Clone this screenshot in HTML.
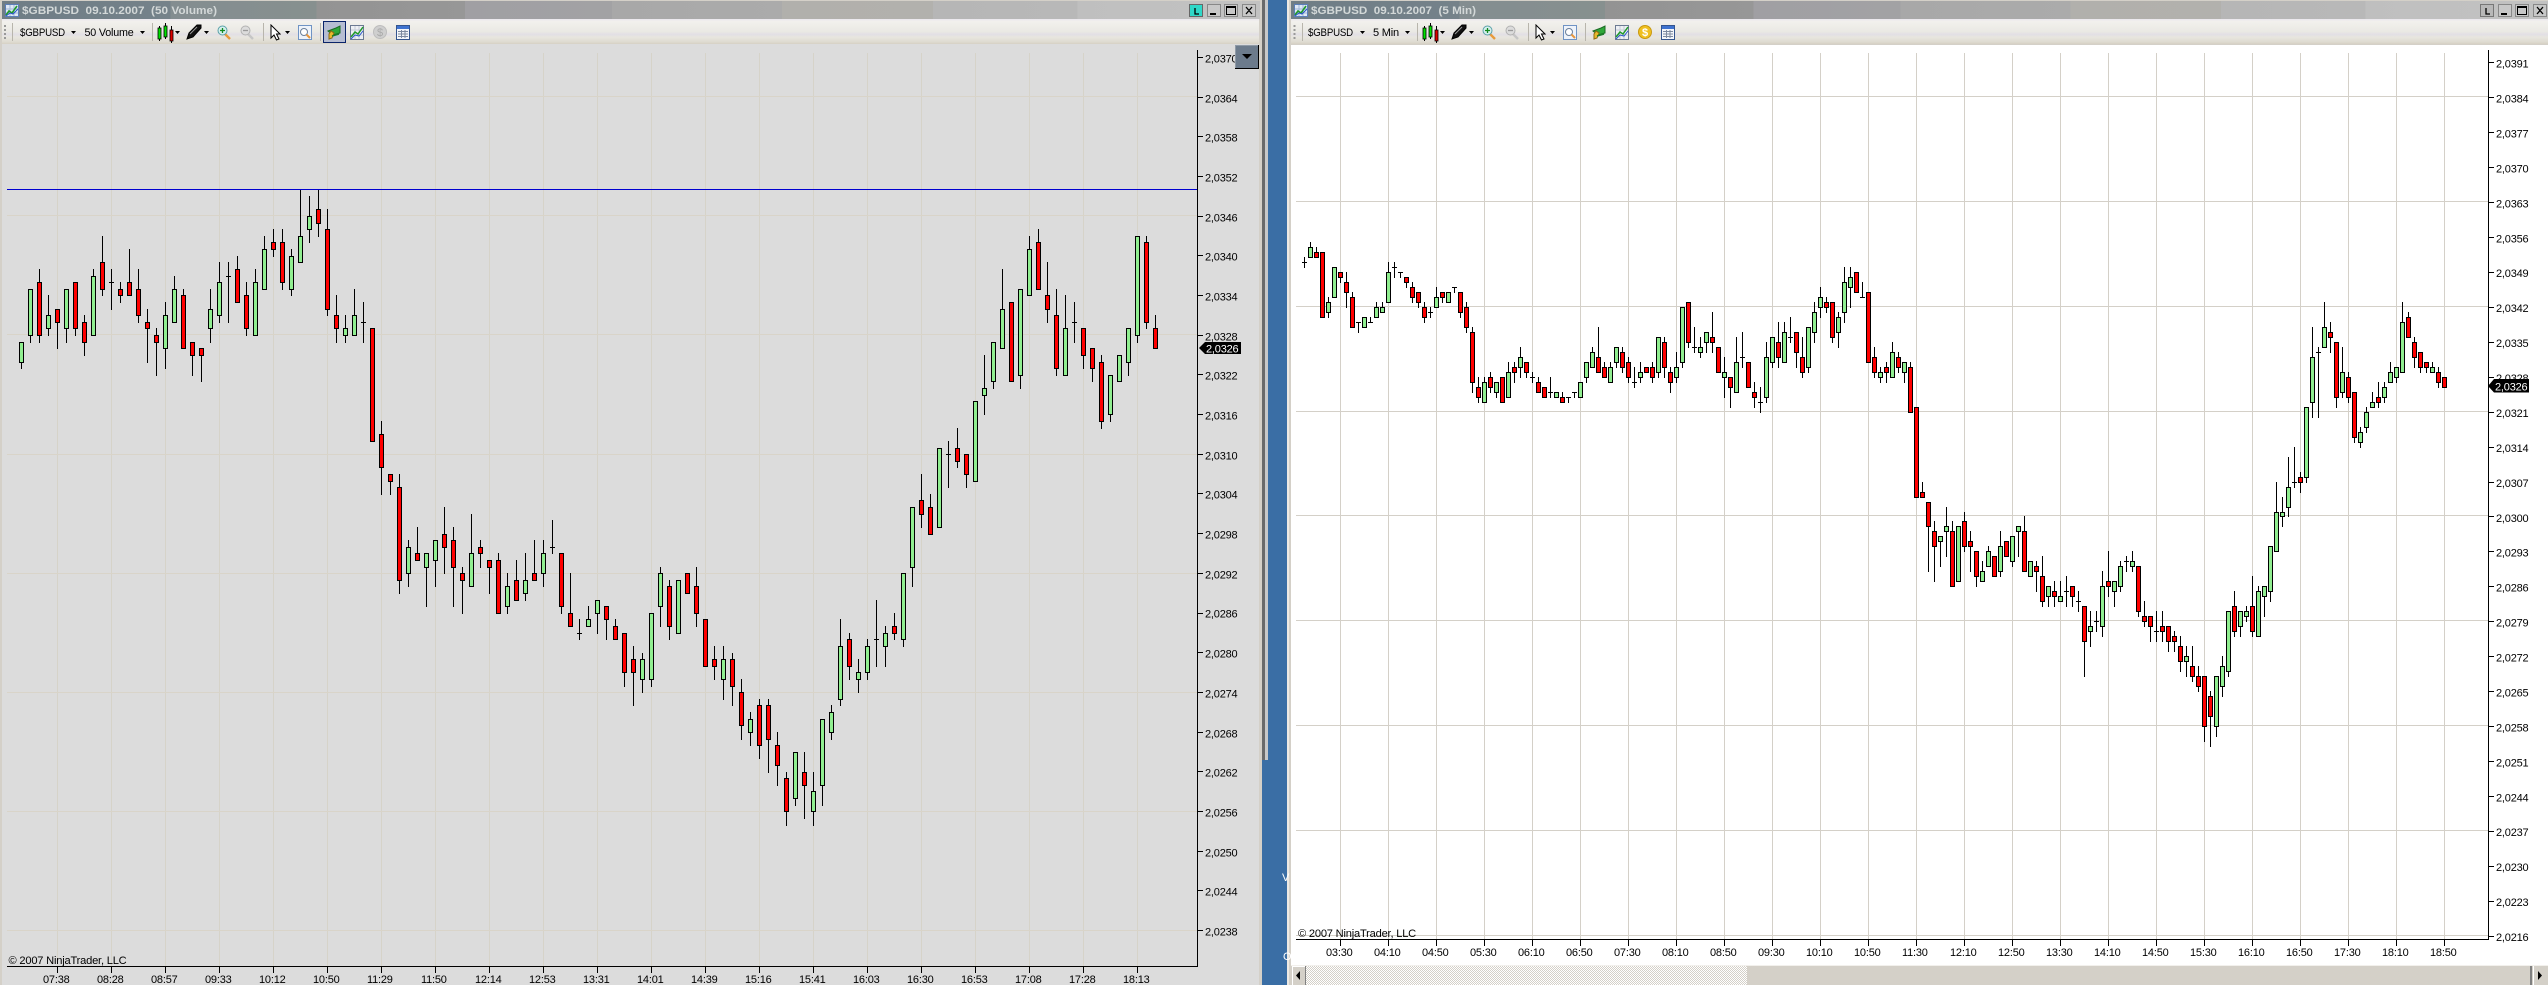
<!DOCTYPE html>
<html><head><meta charset="utf-8"><title>NinjaTrader charts</title>
<style>
html,body{margin:0;padding:0;background:#3a6ea5;width:2548px;height:985px;overflow:hidden}
svg{display:block;position:absolute;left:0;top:0}
text{font-family:"Liberation Sans",sans-serif;font-size:11px;fill:#000;white-space:pre;letter-spacing:-.2px}
.t{font-weight:bold;fill:#d3d8d8;letter-spacing:0}
.m{fill:#fff}
</style></head><body>
<svg width="2548" height="985" viewBox="0 0 2548 985" xmlns="http://www.w3.org/2000/svg">
<defs>
<linearGradient id="tb" x1="0" x2="0" y1="0" y2="1">
<stop offset="0" stop-color="#ebe7ee"/><stop offset=".1" stop-color="#f2f1ed"/><stop offset=".5" stop-color="#eae9e4"/><stop offset=".62" stop-color="#e2dfe5"/><stop offset=".72" stop-color="#e8e6df"/><stop offset=".92" stop-color="#dedbd0"/><stop offset="1" stop-color="#d6d1c4"/>
</linearGradient>
<linearGradient id="tl" x1="0" x2="1" y1="0" y2="0">
<stop offset="0" stop-color="#6f7d86"/><stop offset=".134" stop-color="#75828a"/><stop offset=".134" stop-color="#838d90"/><stop offset=".25" stop-color="#87908f"/><stop offset=".25" stop-color="#939393"/><stop offset=".368" stop-color="#979797"/><stop offset=".368" stop-color="#a09fa3"/><stop offset=".485" stop-color="#a2a2a4"/><stop offset=".485" stop-color="#a8a8a8"/><stop offset=".62" stop-color="#ababab"/><stop offset=".62" stop-color="#b1b0ac"/><stop offset=".74" stop-color="#b2b1ad"/><stop offset=".74" stop-color="#b6b6b6"/><stop offset=".855" stop-color="#b8b8b8"/><stop offset=".855" stop-color="#bfbfbf"/><stop offset="1" stop-color="#c2c2c2"/>
</linearGradient>
<pattern id="dith" width="2" height="2" patternUnits="userSpaceOnUse"><rect width="2" height="2" fill="#fff"/><rect width="1" height="1" fill="#d4d0c8"/><rect x="1" y="1" width="1" height="1" fill="#d4d0c8"/></pattern>
<symbol id="tic" viewBox="0 0 14 13" width="14" height="13"><rect x=".5" y=".5" width="13" height="12" fill="#dfe8f5" stroke="#5c7fb8"/><path d="M1 5H13M1 9H13M5 1V12M9 1V12" stroke="#9fb6d8"/><path d="M1 11L4 7 7 9 12 2" stroke="#1f9a2a" stroke-width="1.6" fill="none"/><path d="M1 12L5 9 8 10 13 5" stroke="#2a55c8" fill="none"/></symbol>
<symbol id="cand" viewBox="0 0 17 20" width="17" height="20"><path d="M2.5 3V18M8.5 0V16M14.5 3V20" stroke="#000"/><rect x="1" y="5" width="3" height="11" fill="#00e000" stroke="#000" stroke-width=".8"/><rect x="7" y="3" width="3" height="11" fill="#00e000" stroke="#000" stroke-width=".8"/><rect x="13" y="7" width="3" height="11" fill="#e00000" stroke="#000" stroke-width=".8"/></symbol>
<symbol id="pen" viewBox="0 0 16 16" width="16" height="16"><path d="M1 15L3 9 11 1 15 1 15 4 7 13Z" fill="#111" stroke="#000"/><path d="M4 10L11 3" stroke="#999"/></symbol>
<symbol id="zin" viewBox="0 0 14 15" width="14" height="15"><path d="M8 9L13 14" stroke="#e89a3c" stroke-width="2.4"/><circle cx="5.5" cy="5.5" r="4.5" fill="#d6f0ee" stroke="#5aa0a8"/><path d="M3 5.5H8M5.500 3V8" stroke="#128a20" stroke-width="1.3"/></symbol>
<symbol id="zout" viewBox="0 0 14 15" width="14" height="15"><path d="M8 9L13 14" stroke="#c6c6c6" stroke-width="2.4"/><circle cx="5.5" cy="5.500" r="4.5" fill="#dcdcdc" stroke="#b2b2b2"/><path d="M3 5.5H8" stroke="#9a9a9a" stroke-width="1.3"/></symbol>
<symbol id="cur" viewBox="0 0 11 17" width="11" height="17"><path d="M1 1V14L4 11 6.500 16 9 15 6.500 10H10Z" fill="#fff" stroke="#000"/></symbol>
<symbol id="zr" viewBox="0 0 14 15" width="14" height="15"><rect x=".5" y=".5" width="13" height="14" fill="#eef3fa" stroke="#6f93c4"/><circle cx="6" cy="7" r="3.500" fill="#fff" stroke="#6a7f9a"/><path d="M8.500 9.500L12 13" stroke="#e8963c" stroke-width="2"/></symbol>
<symbol id="grn" viewBox="0 0 14 15" width="14" height="15"><path d="M1 6L9 3 13 1V8L6 10Z" fill="#2fa83a" stroke="#1b6a24"/><path d="M2 9L4 6 7 8 5 13 2 14Z" fill="#e8b92c" stroke="#8c6a14"/><path d="M5 11L12 9" stroke="#1c7c2a" stroke-width="1.500"/></symbol>
<symbol id="chr" viewBox="0 0 14 15" width="14" height="15"><rect x=".5" y=".5" width="13" height="14" fill="#eef0f4" stroke="#6c7a92"/><path d="M1 5H13M1 10H13M5 1V14M9 1V14" stroke="#c4cad6"/><path d="M1 12L5 7 8 9 13 2" stroke="#1f9a2a" stroke-width="1.500" fill="none"/><path d="M1 14L5 10 9 11 13 6" stroke="#2a55c8" fill="none"/></symbol>
<symbol id="tbl" viewBox="0 0 14 15" width="14" height="15"><rect x=".5" y=".5" width="13" height="14" fill="#f4f6fa" stroke="#34558e"/><rect x="1" y="1" width="12" height="3" fill="#3f73d0"/><path d="M2 6.500H12M2 9H12M2 11.500H12M5.500 5V13M9 5V13" stroke="#7d8aa0"/></symbol>
</defs>

<!-- backgrounds -->
<rect x="0" y="0" width="2548" height="985" fill="#3a6ea5"/>
<rect x="0" y="0" width="1262" height="985" fill="#d4d0c8"/>
<rect x="1262" y="0" width="3" height="760" fill="#6a6a6a"/>
<rect x="1265" y="0" width="3" height="760" fill="#c8c8c8"/>
<rect x="1287" y="0" width="4" height="985" fill="#eeeae4"/>
<rect x="1289" y="0" width="1" height="985" fill="#d4d0c8"/>
<rect x="1290" y="0" width="1258" height="985" fill="#d4d0c8"/>

<!-- left window chrome -->
<rect x="2" y="1" width="1258" height="18" fill="url(#tl)"/>
<rect x="2" y="19" width="1257" height="25" fill="url(#tb)"/>
<rect x="2" y="44" width="1257" height="941" fill="#dcdcdc"/>
<use href="#tic" x="5" y="4"/>
<text class="t" x="22" y="14" textLength="195" lengthAdjust="spacingAndGlyphs">$GBPUSD  09.10.2007  (50 Volume)</text>
<!-- right window chrome -->
<rect x="1291" y="1" width="1257" height="18" fill="url(#tl)"/>
<rect x="1291" y="19" width="1257" height="25" fill="url(#tb)"/>
<rect x="1291" y="45" width="1257" height="920" fill="#fff"/>
<use href="#tic" x="1294" y="4"/>
<text class="t" x="1311" y="14" textLength="165" lengthAdjust="spacingAndGlyphs">$GBPUSD  09.10.2007  (5 Min)</text>

<!-- window buttons left -->
<g shape-rendering="crispEdges">
<rect x="1189.500" y="4.500" width="13" height="12" fill="#2fd8c8" stroke="#666"/>
<rect x="1207.500" y="4.500" width="13" height="12" fill="#c8c8c8" stroke="#888"/><rect x="1210" y="13" width="6" height="2" fill="#000"/>
<rect x="1224.500" y="4.500" width="13" height="12" fill="#c8c8c8" stroke="#888"/><rect x="1226.500" y="6.500" width="9" height="8" fill="none" stroke="#000"/><rect x="1226" y="6" width="10" height="2" fill="#000"/>
<rect x="1242.500" y="4.500" width="13" height="12" fill="#c8c8c8" stroke="#888"/>
<rect x="2480.500" y="4.500" width="13" height="12" fill="#b8b8b8" stroke="#777"/>
<rect x="2498.500" y="4.500" width="13" height="12" fill="#c8c8c8" stroke="#888"/><rect x="2501" y="13" width="6" height="2" fill="#000"/>
<rect x="2515.500" y="4.500" width="13" height="12" fill="#c8c8c8" stroke="#888"/><rect x="2517.500" y="6.500" width="9" height="8" fill="none" stroke="#000"/><rect x="2517" y="6" width="10" height="2" fill="#000"/>
<rect x="2533.500" y="4.500" width="13" height="12" fill="#c8c8c8" stroke="#888"/>
</g>
<path d="M1195 8V14H1199M1246 7L1252 14M1252 7L1246 14M2486 8V14H2490M2537 7L2543 14M2543 7L2537 14" stroke="#000" fill="none" stroke-width="1.300"/>

<!-- left toolbar -->
<g>
<path d="M5 25V27M5 29V31M5 33V35M5 37V39" stroke="#999" stroke-width="2"/>
<path d="M12.500 23V41M152.500 23V41M263.500 23V41M320.500 23V41" stroke="#b8b5ac"/>
<text x="20" y="36" textLength="45" lengthAdjust="spacingAndGlyphs">$GBPUSD</text>
<text x="84.500" y="36" textLength="49" lengthAdjust="spacingAndGlyphs">50 Volume</text>
<path d="M71 31H76L73.500 34ZM140 31H145L142.500 34ZM175 31H180L177.500 34ZM204 31H209L206.500 34ZM285 31H290L287.500 34Z" fill="#000"/>
<use href="#cand" x="157" y="23"/><use href="#pen" x="186" y="24"/><use href="#zin" x="217" y="25"/><use href="#zout" x="240" y="25"/><use href="#cur" x="270" y="24"/><use href="#zr" x="298" y="25"/>
<rect x="323.500" y="21.500" width="22" height="21" fill="#b6bdd2" stroke="#0a246a"/>
<use href="#grn" x="327" y="25"/><use href="#chr" x="350" y="25"/>
<circle cx="380" cy="32" r="6.500" fill="#cfcfcf" stroke="#bdbdbd"/><text x="377" y="36" style="fill:#aaa;letter-spacing:0">$</text>
<use href="#tbl" x="396" y="25"/>
</g>
<!-- right toolbar -->
<g>
<path d="M1294.500 25V27M1294.500 29V31M1294.500 33V35M1294.500 37V39" stroke="#999" stroke-width="2"/>
<path d="M1302.500 23V41M1417.500 23V41M1528.500 23V41M1585.500 23V41" stroke="#b8b5ac"/>
<text x="1308" y="36" textLength="45" lengthAdjust="spacingAndGlyphs">$GBPUSD</text>
<text x="1373" y="36" textLength="26" lengthAdjust="spacingAndGlyphs">5 Min</text>
<path d="M1360 31H1365L1362.500 34ZM1405 31H1410L1407.500 34ZM1440 31H1445L1442.500 34ZM1469 31H1474L1471.500 34ZM1550 31H1555L1552.500 34Z" fill="#000"/>
<use href="#cand" x="1422" y="23"/><use href="#pen" x="1451" y="24"/><use href="#zin" x="1482" y="25"/><use href="#zout" x="1505" y="25"/><use href="#cur" x="1535" y="24"/><use href="#zr" x="1563" y="25"/>
<use href="#grn" x="1592" y="25"/><use href="#chr" x="1615" y="25"/>
<circle cx="1645" cy="32" r="6.500" fill="#f0c020" stroke="#c89810"/><text x="1642" y="36" style="fill:#fff;letter-spacing:0;font-weight:bold">$</text>
<use href="#tbl" x="1661" y="25"/>
</g>

<!-- grids / axes drawn by script into these groups -->
<g id="gridL" shape-rendering="crispEdges"></g>
<g id="gridR" shape-rendering="crispEdges"></g>
<path d="M7 189.500H1197" stroke="#0000d0" shape-rendering="crispEdges"/>
<g id="cL" shape-rendering="crispEdges"></g>
<g id="cR" shape-rendering="crispEdges"></g>
<g id="axes" shape-rendering="crispEdges"></g>

<!-- left y labels -->
<g>
<text x="1205" y="62.500">2,0370</text><text x="1205" y="102.500">2,0364</text><text x="1205" y="141.500">2,0358</text><text x="1205" y="181.500">2,0352</text><text x="1205" y="221.500">2,0346</text><text x="1205" y="260.500">2,0340</text><text x="1205" y="300.500">2,0334</text><text x="1205" y="340.500">2,0328</text><text x="1205" y="379.500">2,0322</text><text x="1205" y="419.500">2,0316</text><text x="1205" y="459.500">2,0310</text><text x="1205" y="498.500">2,0304</text><text x="1205" y="538.500">2,0298</text><text x="1205" y="578.500">2,0292</text><text x="1205" y="617.500">2,0286</text><text x="1205" y="657.500">2,0280</text><text x="1205" y="697.500">2,0274</text><text x="1205" y="737.500">2,0268</text><text x="1205" y="776.500">2,0262</text><text x="1205" y="816.500">2,0256</text><text x="1205" y="856.500">2,0250</text><text x="1205" y="895.500">2,0244</text><text x="1205" y="935.500">2,0238</text>
</g>
<!-- right y labels -->
<g>
<text x="2496" y="67.500">2,0391</text><text x="2496" y="102.500">2,0384</text><text x="2496" y="137.500">2,0377</text><text x="2496" y="172.500">2,0370</text><text x="2496" y="207.500">2,0363</text><text x="2496" y="242.500">2,0356</text><text x="2496" y="277">2,0349</text><text x="2496" y="312">2,0342</text><text x="2496" y="347">2,0335</text><text x="2496" y="382">2,0328</text><text x="2496" y="417">2,0321</text><text x="2496" y="452">2,0314</text><text x="2496" y="487">2,0307</text><text x="2496" y="522">2,0300</text><text x="2496" y="556.500">2,0293</text><text x="2496" y="591.500">2,0286</text><text x="2496" y="626.500">2,0279</text><text x="2496" y="661.500">2,0272</text><text x="2496" y="696.500">2,0265</text><text x="2496" y="731.500">2,0258</text><text x="2496" y="766.500">2,0251</text><text x="2496" y="801.500">2,0244</text><text x="2496" y="836">2,0237</text><text x="2496" y="871">2,0230</text><text x="2496" y="906">2,0223</text><text x="2496" y="941">2,0216</text>
</g>
<!-- left x labels -->
<g>
<text x="43" y="983">07:38</text><text x="97" y="983">08:28</text><text x="151" y="983">08:57</text><text x="205" y="983">09:33</text><text x="259" y="983">10:12</text><text x="313" y="983">10:50</text><text x="367" y="983">11:29</text><text x="421" y="983">11:50</text><text x="475" y="983">12:14</text><text x="529" y="983">12:53</text><text x="583" y="983">13:31</text><text x="637" y="983">14:01</text><text x="691" y="983">14:39</text><text x="745" y="983">15:16</text><text x="799" y="983">15:41</text><text x="853" y="983">16:03</text><text x="907" y="983">16:30</text><text x="961" y="983">16:53</text><text x="1015" y="983">17:08</text><text x="1069" y="983">17:28</text><text x="1123" y="983">18:13</text>
<text x="8.500" y="964" textLength="118" lengthAdjust="spacingAndGlyphs">© 2007 NinjaTrader, LLC</text>
</g>
<!-- right x labels -->
<g>
<text x="1326" y="956">03:30</text><text x="1374" y="956">04:10</text><text x="1422" y="956">04:50</text><text x="1470" y="956">05:30</text><text x="1518" y="956">06:10</text><text x="1566" y="956">06:50</text><text x="1614" y="956">07:30</text><text x="1662" y="956">08:10</text><text x="1710" y="956">08:50</text><text x="1758" y="956">09:30</text><text x="1806" y="956">10:10</text><text x="1854" y="956">10:50</text><text x="1902" y="956">11:30</text><text x="1950" y="956">12:10</text><text x="1998" y="956">12:50</text><text x="2046" y="956">13:30</text><text x="2094" y="956">14:10</text><text x="2142" y="956">14:50</text><text x="2190" y="956">15:30</text><text x="2238" y="956">16:10</text><text x="2286" y="956">16:50</text><text x="2334" y="956">17:30</text><text x="2382" y="956">18:10</text><text x="2430" y="956">18:50</text>
<text x="1298" y="937" textLength="118" lengthAdjust="spacingAndGlyphs">© 2007 NinjaTrader, LLC</text>
</g>

<!-- price markers -->
<path d="M1199 348L1205 342H1241V354H1205Z" fill="#000"/><text class="m" x="1206" y="352.500">2,0326</text>
<path d="M2488 386L2494 379H2529V392.500H2494Z" fill="#000"/><text class="m" x="2495" y="390.500">2,0326</text>

<!-- dropdown button -->
<g shape-rendering="crispEdges">
<rect x="1235" y="45" width="24" height="24" fill="#6c7b8c"/>
<path d="M1235 45.500H1258M1235.500 45V68" stroke="#8f9aa6"/>
<path d="M1235 68.500H1259M1258.500 45V69" stroke="#000"/>
</g>
<path d="M1242 54H1252L1247 59Z" fill="#000"/>

<!-- scrollbar -->
<g shape-rendering="crispEdges">
<rect x="1291" y="965" width="1257" height="1" fill="#f2f0ec"/>
<rect x="1306" y="966" width="441" height="19" fill="url(#dith)"/>
<rect x="1747" y="966" width="783" height="19" fill="#d4d0c8"/>
<rect x="1292" y="966" width="14" height="19" fill="#d4d0c8"/><path d="M1292.500 966V985M1292 966.500H1306" stroke="#fff"/><path d="M1305.500 966V985" stroke="#808080"/>
<rect x="2530" y="966" width="2" height="19" fill="#808080"/>
<rect x="2532" y="966" width="16" height="19" fill="#d4d0c8"/><path d="M2533.500 966V985" stroke="#fff"/>
</g>
<path d="M1300 971V980L1296 975.500ZM2538 971V980L2542 975.500Z" fill="#000"/>
<text class="m" x="1283" y="960" style="letter-spacing:0">O</text>
<text class="m" x="1282" y="881" style="letter-spacing:0">V</text>
</svg>
<script>
var NS='http://www.w3.org/2000/svg';
function P(par,d,st,fi){var e=document.createElementNS(NS,'path');e.setAttribute('d',d);if(st)e.setAttribute('stroke',st);e.setAttribute('fill',fi||'none');document.getElementById(par).appendChild(e);}
var L=[[327,324,327,323],[335,328,335,327],[338,336,328,327],[334,329,331,328],[332,332,330,326],[335,329,335,327],[336,336,329,328],[331,330,327,325],[338,328,337,328],[343,339,335,334],[338,336,336,332],[336,335,334,333],[341,336,334,334],[338,335,331,330],[332,330,329,324],[329,328,327,322],[333,326,331,323],[337,330,335,330],[335,334,326,326],[327,327,325,322],[326,326,325,321],[335,329,332,327],[339,331,336,330],[339,337,337,330],[340,338,333,333],[336,334,329,328],[338,328,336,328],[343,335,341,335],[344,342,341,340],[344,342,336,335],[341,335,340,334],[350,339,343,339],[349,344,346,342],[350,347,345,343],[347,344,332,331],[334,331,329,327],[331,328,329,327],[335,328,331,328],[333,330,330,327],[329,329,312,312],[315,313,308,304],[307,307,306,304],[307,305,291,289],[297,292,296,290],[299,295,294,294],[295,293,295,287],[297,294,297,290],[302,298,296,292],[299,297,293,287],[293,292,291,286],[301,290,295,290],[297,296,295,293],[294,294,293,289],[295,294,286,286],[292,287,290,286],[294,291,288,288],[295,289,291,288],[297,292,291,291],[297,292,295,290],[300,296,296,295],[295,295,287,286],[292,286,284,284],[285,283,283,282],[287,284,285,284],[288,286,288,283],[287,287,285,282],[285,284,282,282],[283,283,277,275],[281,279,277,272],[280,276,279,274],[286,276,286,275],[293,287,292,284],[291,290,284,282],[291,283,291,283],[292,292,289,289],[293,290,286,284],[285,285,278,278],[281,279,278,276],[281,276,279,273],[280,279,275,272],[276,274,269,267],[271,268,270,266],[273,272,266,264],[273,272,267,262],[268,266,263,260],[262,261,256,254],[265,258,265,257],[265,262,260,255],[262,256,259,254],[270,260,270,257],[272,268,271,267],[285,273,281,272],[283,282,278,276],[279,276,277,274],[282,277,281,276],[288,282,282,278],[284,281,283,278],[286,284,283,282],[292,282,292,281],[302,293,302,290],[307,303,301,299],[304,302,298,298],[311,299,311,299],[312,310,310,305],[314,311,309,308],[310,310,307,305],[318,306,318,306],[325,319,320,316],[327,321,327,320],[338,326,332,326],[333,333,321,321],[335,322,335,320],[343,334,341,334],[344,342,335,335],[339,334,332,330],[335,331,323,322],[334,322,329,322],[333,330,330,327],[329,329,325,323],[326,326,323,321],[325,324,315,314],[322,316,322,315],[325,321,325,321],[329,324,329,322],[343,328,343,327],[343,342,330,329],[331,329,326,326]];
var R=[[352,351,351,350],[355,352,354,352],[354,353,352,352],[353,353,340,340],[344,341,343,340],[350,344,350,344],[349,349,348,347],[349,347,345,342],[345,344,338,338],[339,339,339,337],[340,338,340,338],[340,339,339,339],[343,340,342,340],[343,341,342,341],[351,343,349,343],[351,350,350,348],[349,349,349,348],[348,348,347,346],[347,346,344,343],[345,345,343,342],[343,342,340,339],[342,341,341,340],[346,342,344,342],[345,345,344,343],[345,343,345,343],[346,346,346,345],[345,345,341,340],[343,342,338,337],[338,337,327,325],[328,326,324,323],[328,323,327,323],[329,328,326,325],[327,325,327,324],[328,328,323,323],[331,324,329,324],[331,330,329,327],[334,330,332,328],[331,331,329,328],[329,328,328,327],[328,327,325,325],[326,326,324,324],[328,325,325,324],[325,324,325,324],[325,324,323,323],[324,324,324,323],[325,325,325,324],[327,324,327,324],[331,328,331,327],[334,330,333,330],[338,332,329,329],[331,330,328,328],[331,327,330,327],[334,331,334,330],[334,333,330,329],[332,331,328,327],[330,327,327,326],[331,328,329,327],[330,330,329,329],[331,330,328,327],[336,329,336,328],[336,335,330,328],[330,329,327,325],[333,328,330,327],[342,331,342,330],[343,343,335,334],[338,334,334,333],[336,333,334,332],[337,335,337,333],[341,336,335,333],[334,334,329,329],[332,328,329,324],[328,328,326,322],[336,325,331,325],[337,332,332,330],[331,331,326,326],[327,325,324,322],[326,323,323,321],[335,324,332,323],[336,331,336,330],[339,335,332,330],[339,331,337,331],[340,336,336,335],[337,337,333,330],[336,332,329,328],[338,330,338,329],[343,337,341,335],[346,342,344,340],[344,343,342,341],[343,343,336,335],[341,337,340,334],[350,341,347,339],[350,346,348,342],[349,349,345,345],[347,344,344,344],[345,345,331,331],[334,332,329,328],[330,328,329,327],[331,330,329,327],[335,328,333,328],[333,332,330,329],[331,329,331,327],[331,330,321,321],[322,322,304,304],[307,305,304,304],[303,303,298,289],[299,297,294,287],[296,295,296,290],[302,297,298,292],[299,297,286,286],[298,287,298,287],[301,299,294,293],[297,295,294,289],[293,293,288,286],[291,287,289,287],[294,290,293,290],[292,292,288,288],[297,289,294,288],[295,295,292,292],[296,291,296,290],[298,297,298,292],[300,297,289,289],[291,288,291,288],[291,290,289,285],[292,288,283,282],[286,284,286,282],[287,285,284,282],[287,283,284,283],[288,285,285,282],[286,286,284,282],[285,283,283,281],[282,282,275,268],[281,277,278,274],[281,279,279,277],[289,278,286,276],[293,287,286,284],[287,285,287,282],[291,286,290,285],[292,291,291,289],[293,290,291,289],[290,290,281,280],[283,280,279,278],[280,280,278,275],[281,277,277,275],[281,278,277,275],[278,278,275,273],[277,276,275,273],[276,274,271,269],[274,271,272,268],[274,270,268,267],[270,268,266,265],[268,268,258,255],[265,264,260,254],[268,258,268,256],[272,266,270,264],[281,269,281,268],[285,282,277,276],[281,278,281,276],[282,280,281,279],[288,282,277,276],[286,276,285,276],[286,284,286,280],[294,285,294,283],[307,293,301,293],[304,300,301,298],[312,302,306,300],[314,307,307,306],[309,308,307,305],[322,308,322,307],[338,323,332,320],[334,333,333,320],[343,334,338,334],[339,337,336,333],[335,335,324,322],[334,325,329,324],[329,328,324,323],[325,325,316,315],[318,315,317,314],[322,318,321,317],[325,322,323,322],[327,324,323,322],[327,324,326,323],[331,327,329,327],[330,328,330,327],[343,329,339,329],[341,340,336,336],[336,335,332,330],[333,333,330,329],[331,331,330,329],[331,329,330,329],[330,329,327,326],[328,328,326,326]];
function yL(p){return Math.round(57.3+(370-p)*6.614);}
function yR(p){return Math.round(411.7+(321-p)*4.99);}
function draw(id,D,x0,dx,y){
 var w='',g='',r='',t='';
 D.forEach(function(c,i){
  var X=Math.floor(x0+dx*i)+.5,h=y(c[0]),o=y(c[1]),k=y(c[2]),l=y(c[3]);
  w+='M'+X+' '+h+'V'+(l+1);
  if(c[1]==c[2]){t+='M'+(X-2.5)+' '+(o+.5)+'H'+(X+2.5);}
  else{
   var a=Math.min(o,k),b=Math.max(o,k);
   var s='M'+(X-2)+' '+(a+.5)+'H'+(X+2)+'V'+(b+.5)+'H'+(X-2)+'Z';
   if(c[2]>c[1])g+=s;else r+=s;
  }
 });
 P(id,w,'#000');P(id,t,'#000');P(id,g,'#000','#90ee90');P(id,r,'#000','#ff0000');
}
var i,d='',e='';
/* left grid */
for(i=0;i<=20;i++){d+='M'+(Math.floor(57.5+54*i)+.5)+' 53V966';}
[96,215,334,454,573,692,811,930].forEach(function(v){e+='M7 '+(v+.5)+'H1197';});
P('gridL',d,'#d6d3c9');P('gridL',e,'#d9d4c9');
/* right grid */
d='';e='';
for(i=0;i<=23;i++){d+='M'+(Math.floor(1340.2+48*i)+.5)+' 53V939';}
[96,201,306,411,515,620,725,830,935].forEach(function(v){e+='M1296 '+(v+.5)+'H2488';});
P('gridR',d,'#d4d0c8');P('gridR',e,'#d4d0c8');
draw('cL',L,21.3,9,yL);
draw('cR',R,1304.2,6,yR);
/* axes */
d='M7 966.500H1197.500M1197.500 50V967M1296 939.500H2488.500M2488.500 50V940';
for(i=0;i<23;i++){d+='M1198 '+(Math.round(57+39.68*i)+.5)+'H1203';}
for(i=0;i<26;i++){d+='M2489 '+(Math.round(62.4+34.93*i)+.5)+'H2494';}
for(i=0;i<=20;i++){d+='M'+(Math.floor(57.5+54*i)+.5)+' 967V973';}
for(i=0;i<=23;i++){d+='M'+(Math.floor(1340.2+48*i)+.5)+' 940V946';}
P('axes',d,'#000');
</script>
</body></html>
